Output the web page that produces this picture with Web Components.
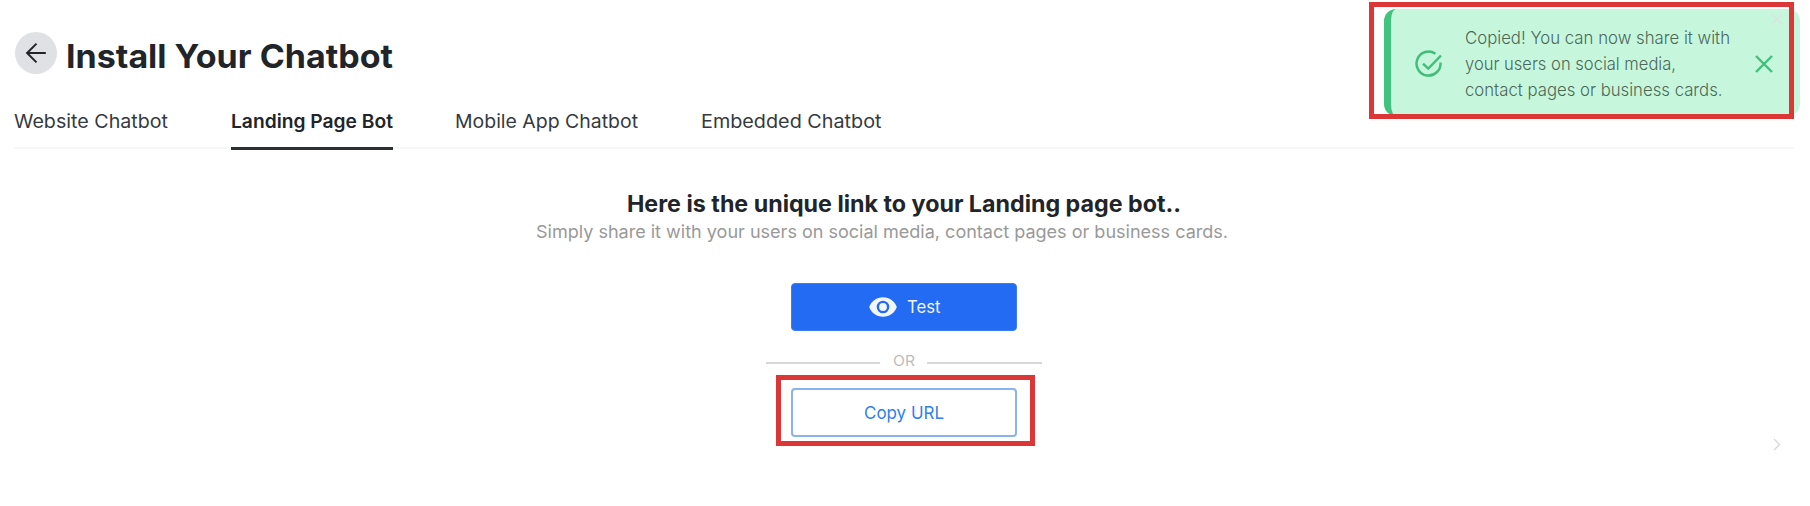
<!DOCTYPE html>
<html lang="en"><head><meta charset="utf-8"><title>Install Your Chatbot</title>
<style>html,body{margin:0;background:#fff}body{font-family:Inter,"Liberation Sans",sans-serif;font-optical-sizing:none;color:#212529;overflow:hidden}</style></head>
<body><install-page></install-page>
<script>
const define=(name,html,ready)=>customElements.define(name,class extends HTMLElement{
  constructor(){super();this.attachShadow({mode:'open'}).innerHTML=html}
  connectedCallback(){if(ready)ready.call(this)}
});

// A single line of text whose letters are widened to a given measure.
define('fitted-text','<style>:host{display:block;white-space:pre}span{display:inline-block;vertical-align:top;transform-origin:0 50%}</style><span><slot></slot></span>',function(){
  const s=this.shadowRoot.querySelector('span'),w=+this.getAttribute('measure');
  const natural=s.getBoundingClientRect().width;
  this.style.width=w+'px';s.style.transform='scaleX('+w/natural+')';
});

define('back-button',`<style>:host{display:grid;place-items:center;width:42px;height:42px;border-radius:50%;background:#dfe1e5}</style>
<svg width="22" height="22" viewBox="0 0 22 22" fill="none" stroke="#212529" stroke-width="2"><path d="M20.800 11H2M11.500 1.600L2.100 11L11.500 20.400"/></svg>`);

define('tab-item',`<style>:host{display:block;box-sizing:border-box;height:40.500px;font-size:18.500px;line-height:24px;color:#343a40}
:host([active]){font-weight:600;color:#212529;border-bottom:3px solid #2d3033}</style><slot></slot>`);
define('tab-bar',`<style>:host{display:flex;gap:62.500px;height:38px;border-bottom:2px solid #f7f7f8}</style><slot></slot>`);

define('action-button',`<style>:host{display:flex;box-sizing:border-box;width:226px;height:49px;align-items:center;justify-content:center;border:2px solid #8ab2f3;border-radius:4px;color:#2f80ed;font-size:17.700px;line-height:24px;padding-top:1px}
:host([primary]){height:48px;background:#236bf3;border:1px solid #3c7cf4;color:#f0f5fe;gap:10px;font-size:17px;padding:0 0 1px 1px}</style><slot></slot>`);
define('eye-icon',`<style>:host{display:block;width:28px;height:20px}svg{display:block}</style>
<svg width="28" height="20" viewBox="0 0 28 20"><path d="M14 .2C7.600.2 2.200 4.200.2 10C2.200 15.800 7.600 19.800 14 19.800S25.800 15.800 27.800 10C25.800 4.200 20.400.2 14 .2Z" fill="#f0f5fe"/><circle cx="14" cy="10" r="5.100" fill="none" stroke="#236bf3" stroke-width="2.400"/></svg>`);
define('or-divider',`<style>:host{display:grid;grid-template-columns:114px 1fr 115px;width:276px;height:20px;font-size:14.300px;line-height:20px;color:#bdbdbd}
i{height:2px;background:#d7d7d7;margin-top:11px}div{display:flex;justify-content:center}</style><i></i><div><slot></slot></div><i></i>`);
define('red-frame',`<style>:host{display:block;box-sizing:border-box;border:5px solid #dd3636;pointer-events:none}</style><slot></slot>`);

define('toast-message',`<style>:host{display:flex;box-sizing:border-box;width:416px;height:107px;border-left:7px solid #3fc37d;border-radius:12px;background:#c6f7dc;padding:16px 27px 0 24px;color:#4c6859;font-size:17.800px;font-weight:300;line-height:26px}
.check{margin-top:24.500px;flex:none}.text{margin-left:22px}.close{margin:30px 0 0 auto;flex:none}.faint{position:absolute;left:387px;top:4px}</style>
<svg class="check" width="28" height="28" viewBox="0 0 28 28" fill="none" stroke="#3fbf7a" stroke-width="2.500"><path d="M25.500 12.500A12 12 0 1 1 20.400 3.700M8 13.600L13.300 18.600L26 5.500"/></svg>
<div class="text"><slot></slot></div>
<svg class="close" width="18" height="18" viewBox="0 0 18 18" stroke="#3fbf7a" stroke-width="2.400"><path d="M1 1L17 17M17 1L1 17"/></svg>
<svg class="faint" width="12" height="12" viewBox="0 0 12 12" stroke="#dbe2df" stroke-width="1.300"><path d="M.5.5L11.500 11.500M11.500.5L.5 11.500"/></svg>`);

define('install-page',`<style>
:host{display:flex;flex-direction:column;position:relative;height:506px;width:1810px}
header{display:flex;gap:9.500px;padding:32px 0 0 14.500px;height:44px}
h1{margin:3.500px 0 0;font-size:33px;line-height:40px;font-weight:700}
tab-bar{margin:33px 16px 0 14px}
main{display:flex;flex-direction:column;align-items:center;width:1808px;padding-top:41px}
h2{margin:0;font-size:22.400px;line-height:28px;font-weight:700}
p{margin:0 44px 0 0;font-size:17.900px;line-height:28px;color:#999}
[primary]{margin-top:37px}or-divider{margin-top:20px}
.copy{display:flex;justify-content:center;width:259px;height:71px;margin:4px 0 0 2px}
.copy action-button{margin:8px 2px 0 0}
aside{position:absolute;left:1384px;top:9px}
.mark{position:absolute;left:1369px;top:2px;width:425px;height:117px}
.next{align-self:flex-end;margin:-8px 29px 0 0}
</style>
<header><back-button></back-button><h1><fitted-text measure="327">Install Your Chatbot</fitted-text></h1></header>
<tab-bar><tab-item><fitted-text measure="154">Website Chatbot</fitted-text></tab-item><tab-item active><fitted-text measure="162">Landing Page Bot</fitted-text></tab-item><tab-item><fitted-text measure="183">Mobile App Chatbot</fitted-text></tab-item><tab-item><fitted-text measure="180.500">Embedded Chatbot</fitted-text></tab-item></tab-bar>
<main><h2><fitted-text measure="554">Here is the unique link to your Landing page bot..</fitted-text></h2>
<p><fitted-text measure="692">Simply share it with your users on social media, contact pages or business cards.</fitted-text></p>
<action-button primary><eye-icon></eye-icon><fitted-text measure="33.500">Test</fitted-text></action-button>
<or-divider><fitted-text measure="22">OR</fitted-text></or-divider>
<red-frame class="copy"><action-button><fitted-text measure="80">Copy URL</fitted-text></action-button></red-frame></main>
<svg class="next" width="8" height="13" viewBox="0 0 8 13" fill="none" stroke="#d8d8d8" stroke-width="1.400"><path d="M1 1L6.500 6.500L1 12"/></svg>
<aside><toast-message><fitted-text measure="265">Copied! You can now share it with</fitted-text><fitted-text measure="211">your users on social media,</fitted-text><fitted-text measure="257.500">contact pages or business cards.</fitted-text></toast-message></aside>
<red-frame class="mark"></red-frame>`);
</script></body></html>
